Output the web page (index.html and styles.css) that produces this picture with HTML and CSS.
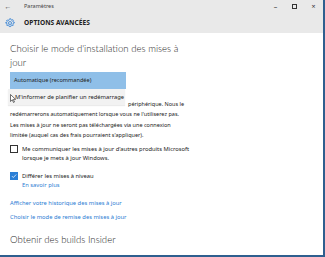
FILE: index.html
```html
<!DOCTYPE html>
<html>
<head>
    <title>Paramètres</title>
    <link rel="stylesheet" href="styles.css">
</head>
<body>
    <div class="window">
        <div class="titlebar">
            <span class="back">&#8592;</span>
            <span class="apptitle">Paramètres</span>
            <span class="controls">
                <span class="ctl">&#8211;</span>
                <span class="ctl max"></span>
                <span class="ctl">&#215;</span>
            </span>
        </div>
        <div class="header">
            <svg class="gear" width="10" height="10" viewBox="0 0 20 20">
                <path d="M10 1.5l1.6 0 .5 2.3 1.6.7 2-1.3 1.2 1.2-1.3 2 .7 1.6 2.3.5v1.6l-2.3.5-.7 1.6 1.3 2-1.2 1.2-2-1.3-1.6.7-.5 2.3H8.4l-.5-2.3-1.6-.7-2 1.3-1.2-1.2 1.3-2-.7-1.6-2.3-.5V9.2l2.3-.5.7-1.6-1.3-2 1.2-1.2 2 1.3 1.6-.7.5-2.3z" fill="none" stroke="#2b7cd3" stroke-width="1.6" stroke-linejoin="round"/>
                <circle cx="10" cy="10" r="3" fill="none" stroke="#2b7cd3" stroke-width="1.6"/>
            </svg>
            <span class="pagetitle">OPTIONS AVANCÉES</span>
        </div>
        <div class="content">
            <h2 class="heading">Choisir le mode d'installation des mises à<br>jour</h2>
            <div class="select">
                <div class="select-box">Automatique (recommandée)</div>
                <div class="menu">
                    <svg class="cursor" width="6" height="9" viewBox="0 0 6 9">
                        <path d="M.5.5v7l1.8-1.7 1.2 2.7 1-.5-1.2-2.6h2.3z" fill="#fff" stroke="#333" stroke-width=".7"/>
                    </svg>
                    M'informer de planifier un redémarrage
                </div>
            </div>
            <p class="desc">périphérique. Nous le<br>redémarrerons automatiquement lorsque vous ne l'utiliserez pas.<br>Les mises à jour ne seront pas téléchargées via une connexion<br>limitée (auquel cas des frais pourraient s'appliquer).</p>

            <label class="check">
                <span class="box"></span>
                <span>Me communiquer les mises à jour d'autres produits Microsoft<br>lorsque je mets à jour Windows.</span>
            </label>

            <label class="check checked">
                <span class="box">
                    <svg width="8" height="8" viewBox="0 0 8 8"><path d="M1.3 4.2l1.8 1.8 3.8-4" fill="none" stroke="#fff" stroke-width="1"/></svg>
                </span>
                <span>Différer les mises à niveau<br><a class="link" href="#">En savoir plus</a></span>
            </label>

            <a class="link block" href="#">Afficher votre historique des mises à jour</a>
            <a class="link block" href="#">Choisir le mode de remise des mises à jour</a>

            <h2 class="heading insider">Obtenir des builds Insider</h2>
        </div>
    </div>
</body>
</html>
```

FILE: styles.css
```css
html, body { margin: 0; padding: 0; }
body { font-family: "Noto Sans", "Open Sans", sans-serif; background: #fff; color: #222; }
.window { width: 323px; height: 255px; border-right: 2px solid #2f5f8f; border-bottom: 2px solid #2f5f8f; overflow: hidden; background: #fff; }

.titlebar { height: 12px; background: #e9e9e9; display: flex; align-items: center; font-size: 5.5px; color: #444; }
.back { width: 24px; text-align: center; font-size: 7px; margin-left: -4px; margin-right: 4px; }
.apptitle { flex: 1; }
.controls { display: flex; }
.ctl { width: 19px; text-align: center; font-size: 7px; color: #333; }
.ctl.max::before { content: ""; display: inline-block; width: 5px; height: 5px; border: 1px solid #333; box-sizing: border-box; }

.header { height: 21px; background: #e9e9e9; display: flex; align-items: center; }
.gear { margin-left: 5px; margin-right: 9px; }
.pagetitle { font-size: 6.6px; font-weight: bold; color: #222; letter-spacing: .05px; }

.content { padding: 0 10px; }
.heading { font-family: Lato, "Noto Sans", sans-serif; font-weight: 300; font-size: 9.6px; line-height: 14px; color: #2a2a2a; margin: 9px 0 0; }
.select { position: relative; margin-top: 2px; }
.select-box { width: 116px; height: 17px; background: #8fbfe8; font-size: 5.6px; line-height: 17px; padding-left: 4px; box-sizing: border-box; color: #222; }
.menu { position: absolute; left: -2px; top: 17px; width: 117px; height: 16px; background: #f2f2f2; font-size: 5.8px; line-height: 16px; padding-left: 7px; box-sizing: border-box; color: #222; box-shadow: 0 1px 1px rgba(0,0,0,.08); }
.cursor { position: absolute; left: 2px; top: 5px; }

.desc { font-size: 5.5px; line-height: 10.3px; margin: 10px 0 0; color: #222; text-indent: 118px; }

.check { display: flex; align-items: flex-start; font-size: 5.8px; line-height: 9px; margin-top: 5px; }
.check .box { width: 8px; height: 8px; border: 1px solid #333; box-sizing: border-box; margin-right: 4px; flex: none; display: flex; align-items: center; justify-content: center; }
.check.checked { margin-top: 9px; }
.check.checked .box { background: #2b7fd6; border-color: #2b7fd6; }

.link { color: #2b7cd3; text-decoration: none; font-size: 5.8px; }
.link.block { display: block; margin-top: 9px; line-height: 9px; }
.link.block + .link.block { margin-top: 5px; }
.insider { margin-top: 11px; }
```
